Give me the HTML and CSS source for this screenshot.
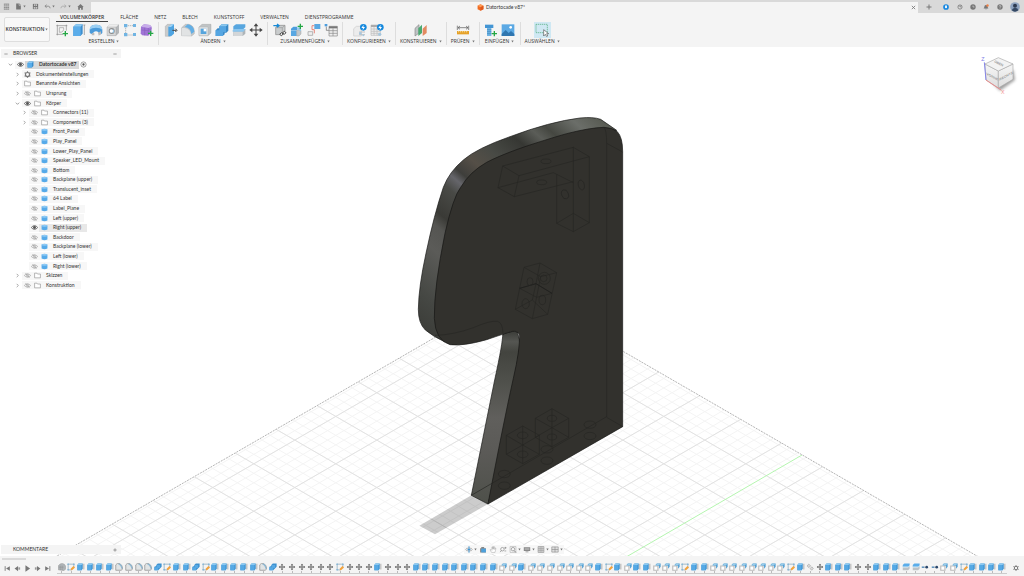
FILE: index.html
```html
<!DOCTYPE html>
<html lang="de">
<head>
<meta charset="utf-8">
<title>Datortocade v87*</title>
<link rel="stylesheet" href="styles.css">
</head>
<body>
<svg class="sprite" aria-hidden="true">
  <symbol id="apps" viewBox="0 0 24 24"><path d="M3 4h18M3 10h18M3 16h18M3 21h18" stroke="#777" stroke-width="3"/><path d="M9 3v20M15 3v20" stroke="#d9d9d9"/></symbol>
  <symbol id="file" viewBox="0 0 24 24"><path d="M4 2h11l5 5v15H4z" fill="#777"/><path d="M14 2v6h6" fill="none" stroke="#d9d9d9" stroke-width="2"/></symbol>
  <symbol id="save" viewBox="0 0 24 24"><path d="M3 3h18v18H3z" fill="#777"/><path d="M7 4h10v6H7zM6 14h12v6H6z" fill="#c8c8c8"/><path d="M12 4v16" stroke="#777" stroke-width="2"/></symbol>
  <symbol id="undo" viewBox="0 0 24 24"><path d="M9 6l-6 5 6 5M4 11h11q5 0 6 7" fill="none" stroke="#888" stroke-width="3"/></symbol>
  <symbol id="redo" viewBox="0 0 24 24"><path d="M15 6l6 5-6 5M20 11H9q-5 0-6 7" fill="none" stroke="#aaa" stroke-width="3"/></symbol>
  <symbol id="home" viewBox="0 0 24 24"><path d="M12 3L1 14h3v9h6v-6h4v6h6v-9h3z" fill="#777"/></symbol>
  <symbol id="orangecube" viewBox="0 0 24 24"><path d="M12 1l10 5v12l-10 5-10-5V6z" fill="#ef6b22"/><path d="M12 1l10 5-10 5L2 6z" fill="#ff9a55"/><path d="M12 11v12l10-5V6z" fill="#e0581a"/></symbol>
  <symbol id="down" viewBox="0 0 10 10"><path d="M1 2h8L5 8z" fill="#777"/></symbol>
  <symbol id="close" viewBox="0 0 12 12"><path d="M2 2l8 8M10 2l-8 8" stroke="#777" stroke-width="2"/></symbol>
  <symbol id="plus" viewBox="0 0 12 12"><path d="M6 1v10M1 6h10" stroke="#777" stroke-width="2"/></symbol>
  <symbol id="minus" viewBox="0 0 12 12"><path d="M1 6h10" stroke="#777" stroke-width="2"/></symbol>
  <symbol id="ext" viewBox="0 0 20 20"><circle cx="10" cy="10" r="9.500" fill="#1787e0"/><path d="M7 5h6v7l-3 3-3-3z" fill="#fff"/></symbol>
  <symbol id="online" viewBox="0 0 20 20"><circle cx="10" cy="10" r="7" fill="none" stroke="#777" stroke-width="2.500"/><path d="M4 6l7 2 2 4M10 8l6-3" fill="none" stroke="#777" stroke-width="2"/></symbol>
  <symbol id="clock" viewBox="0 0 20 20"><circle cx="10" cy="10" r="9" fill="#777"/><path d="M10 5v5h5" fill="none" stroke="#ddd" stroke-width="2"/></symbol>
  <symbol id="bell" viewBox="0 0 20 20"><path d="M2 15q3-3 3-8 1-4 5-4t5 4q0 5 3 8zM8 16h4l-2 3z" fill="#777"/><circle cx="15" cy="5" r="4" fill="#f08045"/></symbol>
  <symbol id="help" viewBox="0 0 20 20"><circle cx="10" cy="10" r="9" fill="#777"/><path d="M7 8q0-3 3-3t3 3q0 2-3 3v2M10 14v2" fill="none" stroke="#ddd" stroke-width="2"/></symbol>
  <symbol id="avatar" viewBox="0 0 30 30"><circle cx="15" cy="15" r="14.500" fill="#8fa3bf"/><circle cx="15" cy="11" r="6" fill="#2d3a50"/><path d="M5 25q3-8 10-8t10 8q-10 8-20 0z" fill="#354863"/></symbol>

  <symbol id="t-sketch" viewBox="0 0 42 42"><path d="M4 8h33M7 5v32M34 5v18M4 34h20" fill="none" stroke="#888" stroke-width="2"/><path d="M13 14h13q2 14-13 14z" fill="none" stroke="#999" stroke-width="2"/><path d="M31 24v16M23 32h16" stroke="#25a845" stroke-width="4"/></symbol>
  <symbol id="t-extrude" viewBox="0 0 42 42"><path d="M4 11l8-7h20v28l-7 7H4z" fill="#3e8fce"/><path d="M4 11l8-7h20l-6 7z" fill="#8fcbf3"/><path d="M4 11h22v28H4z" fill="#5badea"/><path d="M37 6v30M34 6h6" stroke="#888" stroke-width="2"/></symbol>
  <symbol id="t-revolve" viewBox="0 0 42 42"><path d="M2 21Q2 5 21 5t19 16v9q-4 5-10 3-1-8-9-8t-9 8q-6 1-10-4z" fill="#4b9bda"/><path d="M2 20Q2 5 21 5t19 15q-6-6-19-6T2 20z" fill="#9bcff3"/><path d="M9 30h7v7H8zM27 29l9-4v9l-7 4z" fill="#bbb"/></symbol>
  <symbol id="t-hole" viewBox="0 0 42 42"><path d="M3 12l9-8h27v26l-9 8H3z" fill="#b4b7b9"/><path d="M3 12l9-8h27l-9 8z" fill="#ededed"/><path d="M3 12h27v26H3z" fill="#d5d7d8" stroke="#999"/><circle cx="17" cy="24" r="9" fill="#8b8b8b"/><path d="M13 20h11v9H13z" fill="#9ac9e8"/><circle cx="16" cy="24" r="5" fill="#fff"/></symbol>
  <symbol id="t-pattern" viewBox="0 0 42 42"><path d="M8 8h28M8 8v28h28" fill="none" stroke="#999" stroke-width="2" stroke-dasharray="4 2"/><path d="M3 3h10v10H3zM30 3h9v9h-9zM3 30h10v10H3zM30 30h9v9h-9z" fill="#70b4e3"/></symbol>
  <symbol id="t-form" viewBox="0 0 42 42"><path d="M3 11l9-7 18 2 5 6-1 18-10 8-18-1-4-6z" fill="#a074d6"/><path d="M3 11l9-7 18 2 5 5-10 4z" fill="#c8adea"/><path d="M4 21l20 2 11-6M14 14v23M25 15v22" fill="none" stroke="#8a62bd" stroke-width="2"/><path d="M32 23v16M24 31h16" stroke="#25a845" stroke-width="4"/></symbol>
  <symbol id="t-press" viewBox="0 0 42 42"><path d="M4 10l6-6h16v28l-8 8H4z" fill="#c8cbcc" stroke="#999"/><path d="M13 12l9-8h8v28l-9 8h-8z" fill="#4fa4e1"/><path d="M13 12l9-8h8l-9 8z" fill="#a3d6f7"/><path d="M25 22h12M34 17l5 5-5 5" fill="none" stroke="#444" stroke-width="3"/></symbol>
  <symbol id="t-fillet" viewBox="0 0 42 42"><path d="M2 38V14L13 4h11q15 4 16 20v8l-8 7z" fill="#c3c7c9" stroke="#999"/><path d="M3 38V15h8q18 2 19 23z" fill="#e1e3e4"/><path d="M11 12l9-8q18 3 20 22l-9 7Q30 15 11 12z" fill="#63afe5"/></symbol>
  <symbol id="t-shell" viewBox="0 0 42 42"><path d="M3 12l9-8h27v26l-9 8H3z" fill="#bfc3c5" stroke="#999"/><path d="M3 12h27v26H3z" fill="#dfe2e3" stroke="#aaa"/><path d="M8 17h17v16H8z" fill="#57a5dd"/><path d="M17 17h8v8h-8z" fill="#fff"/></symbol>
  <symbol id="t-combine" viewBox="0 0 42 42"><path d="M13 10l7-6h20v19l-6 6h-5v5l-6 5H2V22l6-6h5z" fill="#3989c6"/><path d="M2 22h11V10h20v18h-9v11H2z" fill="#55a6e2"/><path d="M13 10l7-6h20l-7 6z" fill="#8bc8ef"/></symbol>
  <symbol id="t-split" viewBox="0 0 42 42"><path d="M4 10l8-6h28v9l-8 7H4z" fill="#57a6df"/><path d="M4 24l8-6h28v14l-8 7H4z" fill="#aeb4b8"/><path d="M4 26h28v13H4z" fill="#d3d6d8"/><path d="M2 21l8-3h31l-7 8H2z" fill="#8cc6ee"/></symbol>
  <symbol id="t-move" viewBox="0 0 42 42"><path d="M21 8v26M8 21h26" stroke="#444" stroke-width="3"/><path d="M21 1l7 9H14zM21 41l7-9H14zM1 21l9-7v14zM41 21l-9-7v14z" fill="#444"/></symbol>
  <symbol id="t-newcomp" viewBox="0 0 42 42"><path d="M8 14l6-7h22v17l-8 11H8z" fill="#c9cccd" stroke="#888" stroke-width="2"/><path d="M8 14h20v21M28 14l8-7" fill="none" stroke="#999" stroke-width="2"/><path d="M1 8h15M12 3l6 5-6 5" fill="none" stroke="#1689d6" stroke-width="4"/><path d="M20 34l6-5 5 4-6 5zM28 30l6-5 5 4-5 5z" fill="#eee" stroke="#444" stroke-width="3"/></symbol>
  <symbol id="t-asm" viewBox="0 0 42 42"><path d="M3 17l7-6h12v10H3z" fill="#4c9ddd"/><path d="M3 22h17v17H3z" fill="#59a8e2"/><path d="M20 22h13v11l-6 6h-7z" fill="#c4c8ca" stroke="#888"/><path d="M20 18l5-5h8v12" fill="#94c9ed"/><path d="M31 2v16M23 10h16" stroke="#25a845" stroke-width="4"/></symbol>
  <symbol id="t-joint" viewBox="0 0 42 42"><path d="M22 3h18v15H22z" fill="#5aa8e2"/><path d="M3 26h14v11H3z" fill="#eee" stroke="#999" stroke-width="2"/><path d="M22 8h-7v12h7v11" fill="none" stroke="#e05545" stroke-width="2"/></symbol>
  <symbol id="t-bom" viewBox="0 0 42 42"><path d="M2 3h8v7H2z" fill="#4c9ddd"/><path d="M7 11v11h8" fill="none" stroke="#666" stroke-width="2"/><path d="M15 10h25v29H15z" fill="#eee" stroke="#888" stroke-width="2"/><path d="M15 10h25v6H15z" fill="#777"/><path d="M15 23h25M15 31h25M27 16v23" stroke="#888" stroke-width="2"/></symbol>
  <symbol id="t-conf1" viewBox="0 0 42 42"><path d="M2 17l8-7h15v29H2z" fill="#ececec" stroke="#ccc" stroke-width="2"/><path d="M18 27h18M18 35h18" stroke="#aaa" stroke-width="2"/><circle cx="22" cy="31" r="4" fill="#a7c8df"/><circle cx="31" cy="37" r="3" fill="#a7c8df"/><circle cx="31" cy="13" r="10" fill="#1689dd"/><path d="M32 5l-7 10h5l-1 7 7-10h-5z" fill="#fff"/></symbol>
  <symbol id="t-conf2" viewBox="0 0 42 42"><path d="M3 6h28v31H3z" fill="#eee" stroke="#bbb" stroke-width="2"/><path d="M3 6h22v6H3z" fill="#aaa"/><path d="M3 18h28M3 25h28M3 31h28M12 12v25M21 12v25" stroke="#bbb" stroke-width="2"/><circle cx="31" cy="13" r="10" fill="#1689dd"/><path d="M32 5l-7 10h5l-1 7 7-10h-5z" fill="#fff"/><circle cx="29" cy="34" r="5" fill="#a7c8df"/></symbol>
  <symbol id="t-plane" viewBox="0 0 42 42"><path d="M3 16L15 5v25L3 39z" fill="#bfc3c5" stroke="#888" stroke-width="2"/><path d="M13 16L24 5v25L13 39z" fill="#4aaa71"/><path d="M26 17L38 6v24L26 39z" fill="#e28a61"/></symbol>
  <symbol id="t-measure" viewBox="0 0 42 42"><path d="M4 8v13M38 8v13M6 14h30M12 9l-6 5 6 5M30 9l6 5-6 5" fill="none" stroke="#555" stroke-width="2"/><path d="M3 24h36v10H3z" fill="#e6a229"/><path d="M8 24v4M14 24v4M20 24v4M26 24v4M32 24v4" stroke="#fff3c7" stroke-width="2"/></symbol>
  <symbol id="t-insert" viewBox="0 0 42 42"><path d="M3 5h25v10H3z" fill="#4395d4"/><path d="M9 15h13v24H9z" fill="#70b4e4"/><path d="M9 20h13M9 26h13M9 32h13" stroke="#3b85bd" stroke-width="2"/><path d="M31 24v16M23 32h16" stroke="#25a845" stroke-width="4"/></symbol>
  <symbol id="t-image" viewBox="0 0 42 42"><path d="M2 4h38v35H2z" fill="#5ba9e4"/><path d="M2 33l12-12 9 9 7-6 10 9v6H2z" fill="#2f76b0"/><circle cx="29" cy="13" r="4" fill="#fff"/></symbol>
  <symbol id="t-select" viewBox="0 0 42 42"><path d="M3 4h34v25H3z" fill="none" stroke="#48a873" stroke-width="2" stroke-dasharray="4 2"/><path d="M26 20v19l5-5 4 7 3-2-3-7h6z" fill="#fff" stroke="#555" stroke-width="2"/></symbol>

  <symbol id="chev-r" viewBox="0 0 12 12"><path d="M4 2l4 4-4 4" fill="none" stroke="#777" stroke-width="1.500"/></symbol>
  <symbol id="chev-d" viewBox="0 0 12 12"><path d="M2 4l4 4 4-4" fill="none" stroke="#666" stroke-width="1.500"/></symbol>
  <symbol id="eye" viewBox="0 0 24 24"><path d="M1 12Q12-1 23 12 12 25 1 12z" fill="none" stroke="#666" stroke-width="3"/><circle cx="12" cy="12" r="5" fill="#555"/></symbol>
  <symbol id="eye-off" viewBox="0 0 24 24"><path d="M1 12Q12 0 23 12 12 24 1 12z" fill="none" stroke="#999" stroke-width="2"/><circle cx="12" cy="12" r="4" fill="none" stroke="#999" stroke-width="2"/><path d="M5 4l14 16" stroke="#999" stroke-width="2"/></symbol>
  <symbol id="folder" viewBox="0 0 24 24"><path d="M2 20V4h8l2 3h10v13z" fill="#fff" stroke="#888" stroke-width="2"/></symbol>
  <symbol id="body" viewBox="0 0 24 24"><path d="M2 5q10-5 20 0v14q-10 5-20 0z" fill="#56aae9"/><ellipse cx="12" cy="6" rx="10" ry="3" fill="#91cbf5"/></symbol>
  <symbol id="comp" viewBox="0 0 24 24"><path d="M2 7l5-5h15v15l-5 5H2z" fill="#378dcc"/><path d="M2 7l5-5h15l-5 5z" fill="#8bc9f4"/><path d="M2 7h15v15H2z" fill="#59adea"/></symbol>
  <symbol id="gear" viewBox="0 0 24 24"><circle cx="12" cy="12" r="7" fill="none" stroke="#777" stroke-width="4"/><path d="M12 1v4M12 19v4M2 6l4 2M18 16l4 2M2 18l4-2M18 8l4-2" stroke="#777" stroke-width="4"/></symbol>
  <symbol id="radio" viewBox="0 0 24 24"><circle cx="12" cy="12" r="9" fill="#fff" stroke="#666" stroke-width="2"/><circle cx="12" cy="12" r="4" fill="#555"/></symbol>

  <symbol id="orbit" viewBox="0 0 24 24"><ellipse cx="12" cy="12" rx="11" ry="5" fill="none" stroke="#888" stroke-width="2"/><path d="M12 1v22M7 12h10" stroke="#318ed0" stroke-width="3"/></symbol>
  <symbol id="look" viewBox="0 0 24 24"><path d="M2 8h20v14H2zM6 3h10v5H6z" fill="#888"/><path d="M6 9h16v13H6z" fill="#4da0db"/></symbol>
  <symbol id="hand" viewBox="0 0 24 24"><path d="M7 22l-5-9 3-1 3 3V4h3v7V2h3v9l1-8h3v9l2-5 2 1-3 14z" fill="#fff" stroke="#999" stroke-width="1.500"/></symbol>
  <symbol id="zoom" viewBox="0 0 24 24"><circle cx="10" cy="11" r="6" fill="none" stroke="#777" stroke-width="2"/><path d="M6 16l-4 5M20 3v7M17 6h7M17 17h6" stroke="#777" stroke-width="2"/></symbol>
  <symbol id="fit" viewBox="0 0 24 24"><path d="M2 2h20v20H2z" fill="none" stroke="#aaa" stroke-width="2"/><circle cx="12" cy="11" r="6" fill="none" stroke="#777" stroke-width="2"/><path d="M16 16l6 6" stroke="#777" stroke-width="3"/></symbol>
  <symbol id="display" viewBox="0 0 24 24"><path d="M1 4h22v13H1zM7 19h10v2H7z" fill="#888"/><path d="M4 7h16v7H4z" fill="#aaa"/></symbol>
  <symbol id="grid" viewBox="0 0 24 24"><path d="M2 2h20v20H2z" fill="#ddd" stroke="#888" stroke-width="2"/><path d="M9 2v20M15 2v20M2 9h20M2 15h20" stroke="#999" stroke-width="2"/></symbol>
  <symbol id="views" viewBox="0 0 24 24"><path d="M1 3h22v18H1z" fill="#ddd" stroke="#888" stroke-width="2"/><path d="M12 3v18M1 12h22" stroke="#888" stroke-width="2"/></symbol>

  <symbol id="first" viewBox="0 0 24 24"><path d="M4 4v16" stroke="#777" stroke-width="3"/><path d="M20 4v16L7 12z" fill="#777"/></symbol>
  <symbol id="prev" viewBox="0 0 24 24"><path d="M14 3v18L2 12z" fill="#777"/><path d="M15 8h6v8h-6z" fill="#999"/></symbol>
  <symbol id="play" viewBox="0 0 24 24"><path d="M5 1v22l16-11z" fill="#777"/></symbol>
  <symbol id="next" viewBox="0 0 24 24"><path d="M10 3v18l12-9z" fill="#777"/><path d="M3 8h6v8H3z" fill="#999"/></symbol>
  <symbol id="last" viewBox="0 0 24 24"><path d="M20 4v16" stroke="#777" stroke-width="3"/><path d="M4 4v16l13-8z" fill="#777"/></symbol>

  <symbol id="k-b" viewBox="0 0 21 21"><path d="M1 18V7q4-6 10-6t9 7v8l-4 4z" fill="#aeb3b6" stroke="#858585"/><path d="M6 7v12M11 7v12M2 11h13" stroke="#8b8b8b"/></symbol>
  <symbol id="k-s" viewBox="0 0 21 21"><path d="M3 3h15v9M3 3v15h9" fill="none" stroke="#89a9bf" stroke-width="2"/><path d="M1 1h4v4H1zM16 1h4v4h-4zM1 16h4v4H1z" fill="#86b5d5"/><path d="M10 20l1-6 6-6 4 4-6 6z" fill="#f1a23d"/></symbol>
  <symbol id="k-e" viewBox="0 0 21 21"><path d="M1 5l3-4h11v14l-3 4H1z" fill="#368ccb"/><path d="M1 5l3-4h11l-3 4z" fill="#91cdf4"/><path d="M1 5h11v14H1z" fill="#55a9e5"/><path d="M18 2v15" stroke="#999" stroke-width="2"/></symbol>
  <symbol id="k-f" viewBox="0 0 21 21"><path d="M2 19V5l4-4h5q8 3 9 12v3l-4 3z" fill="#e1e4e5" stroke="#929292" stroke-width="2"/><path d="M8 3q8 3 9 13l3-2Q18 3 11 1z" fill="#8db7d2"/></symbol>
  <symbol id="k-c" viewBox="0 0 21 21"><path d="M6 5l4-4h10v9l-5 5-4 4H1v-9l5-2z" fill="#3d91d0"/><path d="M1 11h6V5h9v8h-5v6H1z" fill="#57a9e4"/></symbol>
  <symbol id="k-m" viewBox="0 0 21 21"><path d="M10.500 4v13M4 10.500h13" stroke="#555" stroke-width="2"/><path d="M10.500 2l3 4h-6zM10.500 19l3-4h-6zM2 10.500l4-3v6zM19 10.500l-4-3v6z" fill="#555"/></symbol>
  <symbol id="k-x" viewBox="0 0 21 21"><path d="M2 8h11v11H2z" fill="#fff" stroke="#bbb" stroke-width="3"/><path d="M6 6l4-5h10v9l-4 5V7z" fill="#4b9bd2"/><path d="M7 6l4-4h8l-3 4z" fill="#9acdeb"/></symbol>
  <symbol id="k-l" viewBox="0 0 21 21"><path d="M3 8l4-5 5 4-4 5zM11 15l4-5 4 4-4 5z" fill="#ddd" stroke="#aaa" stroke-width="2"/></symbol>
  <symbol id="k-p" viewBox="0 0 21 21"><path d="M2 5l4-4h14v5l-4 4H2z" fill="#5badea"/><path d="M2 12h14l4-4v7l-4 4H2z" fill="#bcc2c6"/><path d="M2 10h14l4-3" fill="none" stroke="#a8d8f4" stroke-width="2"/></symbol>
  <symbol id="k-j" viewBox="0 0 21 21"><path d="M2 9h7v4H2z" fill="#5b91bd"/><path d="M9 11h4" stroke="#999" stroke-width="2"/><circle cx="15" cy="11" r="3.500" fill="#29466b"/></symbol>
</svg>

<header class="titlebar">
  <nav class="quick">
    <button aria-label="Datengruppe"><svg><use href="#apps"/></svg></button>
    <button aria-label="Datei"><svg><use href="#file"/></svg><svg class="arrow"><use href="#down"/></svg></button>
    <button aria-label="Speichern"><svg><use href="#save"/></svg></button>
    <button aria-label="Rückgängig"><svg><use href="#undo"/></svg><svg class="arrow"><use href="#down"/></svg></button>
    <button aria-label="Wiederholen"><svg><use href="#redo"/></svg><svg class="arrow"><use href="#down"/></svg></button>
    <button aria-label="Startseite"><svg><use href="#home"/></svg></button>
  </nav>
  <div class="doc-tab">
    <div class="doc-title"><svg><use href="#orangecube"/></svg><span>Datortocade v87*</span></div>
    <button aria-label="Schließen"><svg><use href="#close"/></svg></button>
  </div>
  <nav class="account">
    <button class="new-tab" aria-label="Neu"><svg><use href="#plus"/></svg></button>
    <button aria-label="Erweiterungen"><svg><use href="#ext"/></svg></button>
    <button aria-label="Online"><svg><use href="#online"/></svg></button>
    <button aria-label="Auftragsstatus"><svg><use href="#clock"/></svg></button>
    <button aria-label="Benachrichtigungen"><svg><use href="#bell"/></svg></button>
    <button aria-label="Hilfe"><svg><use href="#help"/></svg></button>
    <button class="avatar" aria-label="Konto"><svg><use href="#avatar"/></svg></button>
  </nav>
</header>

<section class="ribbon">
  <button class="workspace">KONSTRUKTION <svg class="arrow"><use href="#down"/></svg></button>
  <div class="ribbon-main">
    <nav class="tabs">
      <button class="active">VOLUMENKÖRPER</button><button>FLÄCHE</button><button>NETZ</button><button>BLECH</button><button>KUNSTSTOFF</button><button>VERWALTEN</button><button>DIENSTPROGRAMME</button>
    </nav>
    <div class="groups" id="groups"></div>
  </div>
</section>

<main class="stage">
  <svg class="scene" viewBox="0 47 1024 509" preserveAspectRatio="xMidYMid slice" role="img" aria-label="3D-Ansicht">
    <defs>
      <clipPath id="floor"><path d="M517 290L1117 637H-83z"/></clipPath>
      <linearGradient id="rim" gradientUnits="userSpaceOnUse" x1="70" y1="700" x2="620" y2="60">
        <stop offset="0" stop-color="#3b3c38"/><stop offset=".1" stop-color="#454743"/><stop offset=".25" stop-color="#5b5b58"/><stop offset=".32" stop-color="#555552"/><stop offset=".36" stop-color="#3a3a36"/><stop offset=".45" stop-color="#494a46"/><stop offset=".49" stop-color="#65656a"/><stop offset=".52" stop-color="#3e3e3b"/><stop offset=".58" stop-color="#554f47"/><stop offset=".65" stop-color="#484a45"/><stop offset=".74" stop-color="#363733"/><stop offset=".8" stop-color="#5b5d58"/><stop offset=".84" stop-color="#454741"/><stop offset=".92" stop-color="#6b6e69"/><stop offset="1" stop-color="#55584f"/>
      </linearGradient>
      <linearGradient id="leg" x1="0" y1="0" x2="0" y2="1">
        <stop offset="0" stop-color="#3c3d39"/><stop offset=".06" stop-color="#555652"/><stop offset=".12" stop-color="#43443f"/><stop offset=".3" stop-color="#50514c"/><stop offset=".5" stop-color="#605f5c"/><stop offset=".7" stop-color="#5b5a57"/><stop offset="1" stop-color="#4e504a"/>
      </linearGradient>
      <linearGradient id="cubeface" x1="0" y1="0" x2="0" y2="1"><stop offset="0" stop-color="#f6f6f6"/><stop offset="1" stop-color="#dedede"/></linearGradient>
      <filter id="soft" x="-30%" y="-30%" width="160%" height="160%"><feGaussianBlur stdDeviation="5"/></filter>
    </defs>
    <g clip-path="url(#floor)">
      <path id="minor" class="minor"/>
      <path id="major" class="major"/>
      <path class="axis-y" d="M802 455L602 571"/>
    </g>
    <path class="floor-edge" d="M-83 637L517 290 1117 637"/>
    <g transform="translate(400 100) scale(.33333)">
      <path fill="#000" fill-opacity=".2" d="M58 1277L105 1303 264 1212 214 1186z"/>
      <path class="edge" fill="url(#rim)" d="M135 726Q100 710 76 690 55 670 55 628 56 560 78 460 102 345 130 262 148 215 190 180 230 145 330 110 450 65 540 54 580 50 602 58L650 91 600 130 250 300 170 600z"/>
      <path class="edge" fill="url(#leg)" d="M308 703Q335 690 352 696L362 730 300 1080 264 1212 214 1186 284 840Q309 725 308 703z"/>
      <path class="edge" fill="#32312d" d="M668 155V980L264 1212Q310 970 340 835 361 745 358 705 354 692 338 694 315 700 260 719 190 739 150 734 106 721 103 655 102 560 135 400 160 290 182 262 210 215 260 187 330 150 500 101 570 83 612 82 638 83 652 95 668 112 668 155z"/>
      <g class="hidden-lines">
        <path d="M308 198L520 142 568 170 357 227zM308 198L294 263 343 290 357 227M294 263L460 218 520 248M343 290L520 245V142M470 223V370L520 395 568 368V170M470 370L520 340 568 368M520 245V395"/>
        <ellipse cx="438" cy="184" rx="15" ry="7"/><ellipse cx="425" cy="247" rx="15" ry="7"/>
        <ellipse cx="495" cy="283" rx="10" ry="14" transform="rotate(-20 495 283)"/><ellipse cx="544" cy="255" rx="9" ry="15" transform="rotate(-15 544 255)"/>
        <path d="M372 502L420 489 470 518 443 643 397 656 346 628zM372 502L422 530 397 656M422 530L470 518M359 565L408 551 456 580 410 592zM420 489L408 551M408 551L397 600 346 628M397 600L443 643"/>
        <path stroke="#1d1d1b" d="M359 565L408 551 456 580"/>
        <ellipse cx="390" cy="545" rx="9" ry="12"/><ellipse cx="377" cy="611" rx="11" ry="15"/><ellipse cx="427" cy="600" rx="10" ry="14"/><circle cx="433" cy="535" r="18"/><circle cx="431" cy="535" r="10"/>
        <path d="M105 706Q160 705 220 683 270 661 292 664 308 667 309 700M612 82Q620 90 620 130V950L214 1186M620 130L668 156M620 952L668 980"/>
        <path d="M456 926L506 955V1012L456 1040 406 1012V955zM406 955L456 983 506 955M406 1012L456 983 506 1012M456 926V1040M368 978L418 1006V1063L368 1091 319 1063V1006zM319 1006L368 1035 418 1006M319 1063L368 1035 418 1063M368 978V1091"/>
        <ellipse cx="456" cy="955" rx="14" ry="9"/><ellipse cx="456" cy="1011" rx="14" ry="9"/><ellipse cx="368" cy="1006" rx="16" ry="10"/><ellipse cx="368" cy="1063" rx="16" ry="10"/>
        <ellipse cx="570" cy="974" rx="18" ry="11"/><ellipse cx="570" cy="1008" rx="18" ry="11"/><ellipse cx="441" cy="1048" rx="18" ry="11"/><ellipse cx="441" cy="1082" rx="18" ry="11"/><ellipse cx="313" cy="1122" rx="18" ry="11"/><ellipse cx="313" cy="1157" rx="18" ry="11"/>
      </g>
    </g>
    <g transform="translate(860 0) scale(.33333)">
      <path d="M385 235L420 272 465 240 460 210z" fill="#777" opacity=".7" filter="url(#soft)"/>
      <path class="cube" d="M375 192L415 213V264L378 240z"/><path class="cube" d="M415 213L459 192V238L415 264z"/><path class="cube top" d="M415 173L459 192 415 213 375 192z"/>
      <path d="M373 187L378 240" stroke="#8585ea" stroke-width="3"/><path d="M378 240L423 270" stroke="#e98b8b" stroke-width="3"/>
      <text class="cube-text" transform="translate(402 187) rotate(26)">OBEN</text>
      <text class="cube-text" transform="translate(379 224) skewY(28)">VORNE</text>
      <text class="cube-text" transform="translate(418 242) skewY(-27)">RECHTS</text>
      <text class="axis-text" x="364" y="183" fill="#8080e8">Z</text><text class="axis-text" x="423" y="282" fill="#f59090">X</text>
    </g>
  </svg>

  <aside class="browser">
    <div class="panel-head"><button aria-label="Einklappen"><svg><use href="#minus"/></svg></button><span>BROWSER</span><button aria-label="Minimieren"><svg><use href="#minus"/></svg></button></div>
    <ul class="tree" id="tree"></ul>
  </aside>

  <div class="stage-foot">
    <div class="panel-head comments"><span>KOMMENTARE</span><button aria-label="Kommentar hinzufügen"><svg><use href="#plus"/></svg></button></div>
    <nav class="viewbar">
      <button aria-label="Orbit"><svg><use href="#orbit"/></svg><svg class="arrow"><use href="#down"/></svg></button>
      <button aria-label="Ansehen"><svg><use href="#look"/></svg></button>
      <button aria-label="Pan"><svg><use href="#hand"/></svg></button>
      <button aria-label="Zoom"><svg><use href="#zoom"/></svg></button>
      <button aria-label="Einpassen"><svg><use href="#fit"/></svg><svg class="arrow"><use href="#down"/></svg></button>
      <button aria-label="Anzeige"><svg><use href="#display"/></svg><svg class="arrow"><use href="#down"/></svg></button>
      <button aria-label="Raster"><svg><use href="#grid"/></svg><svg class="arrow"><use href="#down"/></svg></button>
      <button aria-label="Ansichtsfenster"><svg><use href="#views"/></svg><svg class="arrow"><use href="#down"/></svg></button>
    </nav>
  </div>
</main>

<footer class="timeline">
  <div class="player">
    <div class="scroll-thumb"></div>
    <div class="player-buttons">
      <button aria-label="Anfang"><svg><use href="#first"/></svg></button>
      <button aria-label="Zurück"><svg><use href="#prev"/></svg></button>
      <button aria-label="Wiedergabe"><svg><use href="#play"/></svg></button>
      <button aria-label="Vor"><svg><use href="#next"/></svg></button>
      <button aria-label="Ende"><svg><use href="#last"/></svg></button>
    </div>
  </div>
  <div class="track" id="track"></div>
  <button class="settings" aria-label="Einstellungen"><svg><use href="#gear"/></svg></button>
</footer>
<script src="app.js"></script>
</body>
</html>
```

FILE: styles.css
```css
* { box-sizing: border-box; }
html, body { height: 100%; }
body {
  margin: 0;
  display: flex;
  flex-direction: column;
  overflow: hidden;
  background: #fff;
  color: #333;
  font-family: Lato, "Noto Sans", sans-serif;
  font-size: 5px;
  line-height: 7px;
}
button {
  display: flex;
  align-items: center;
  justify-content: center;
  margin: 0;
  padding: 0;
  border: 0;
  background: none;
  color: inherit;
  font: inherit;
}
svg { display: block; flex: none; }
.sprite { position: absolute; width: 0; height: 0; }
.arrow { width: 3px; height: 3px; }

.titlebar {
  display: flex;
  height: 13px;
  flex: none;
  background: #d9d9d9;
}
.quick { display: flex; align-items: center; width: 91px; padding-left: 2px; gap: 5px; }
.quick button { min-width: 8px; gap: 1px; }
.quick svg { width: 7px; height: 7px; }
.quick .arrow, .viewbar .arrow { width: 3px; height: 3px; }
.doc-tab {
  display: flex;
  flex: 1;
  align-items: center;
  margin-top: 2px;
  padding-right: 2px;
  background: #f4f4f4;
}
.doc-title { display: flex; flex: 1; align-items: center; justify-content: center; gap: 2px; }
.doc-title svg { width: 7px; height: 7px; }
.doc-tab button svg { width: 5px; height: 5px; }
.account { display: flex; align-items: center; justify-content: space-between; width: 106px; padding: 0 4px 0 8px; }
.account svg { width: 6px; height: 6px; }
.account .new-tab { margin-right: 4px; }
.account .avatar svg { width: 10px; height: 10px; }

.ribbon {
  display: flex;
  flex: none;
  height: 34px;
  padding: 0 4px;
  background: #f4f4f4;
  font-family: "Open Sans", "Noto Sans", sans-serif;
}
.workspace {
  width: 46px;
  height: 25px;
  margin-top: 4px;
  gap: 1px;
  border: 1px solid #dedede;
  border-radius: 2px;
  background: #f8f8f8;
  font-weight: 600;
}
.tabs { display: flex; gap: 8px; padding-left: 6px; }
.tabs button { padding: 0 4px; height: 9px; border-bottom: 1px solid transparent; }
.tabs .active { border-color: #444; font-weight: 600; }
.groups { display: flex; }
.group { padding: 0 3px; border-right: 1px solid #ddd; height: 23px; }
.group:last-child { border: 0; }
.tools { display: flex; justify-content: center; height: 16px; }
.tools button { width: 17px; height: 16px; }
.tools svg { width: 14px; height: 14px; }
.tools .selected { background: #cfe8f3; }
.group-label { width: 100%; padding: 0 1px; gap: 2px; white-space: nowrap; }

.stage { position: relative; display: flex; flex: 1; flex-direction: column; justify-content: space-between; min-height: 0; }
.scene { position: absolute; inset: 0; width: 100%; height: 100%; }
.minor { fill: none; stroke: #f4f4f4; stroke-width: 1; }
.major { fill: none; stroke: #e2e2e2; stroke-width: 1; }
.axis-y { stroke: #b5f5b0; stroke-width: 1; }
.floor-edge { fill: none; stroke: #b5b5b5; stroke-width: 1; stroke-dasharray: 2 1; }
.edge { stroke: #151514; stroke-width: 2; }
.hidden-lines { fill: none; stroke: #252522; stroke-width: 2; }
.cube { fill: url(#cubeface); stroke: #aaa; stroke-width: 2; }
.cube.top { fill: #f3f3f3; }
.cube-text { font: 700 10px "Liberation Sans", sans-serif; fill: #999; }
.axis-text { font: 400 16px "Liberation Sans", sans-serif; }

.browser, .stage-foot { position: relative; }
.browser { width: 121px; padding: 2px 0 0 1px; }
.panel-head { display: flex; align-items: center; height: 9px; padding: 0 4px 0 3px; background: #f4f4f4; }
.panel-head span { flex: 1; padding-left: 5px; }
.panel-head svg { width: 4px; height: 4px; }
.tree {
  display: grid;
  grid-auto-rows: 1fr;
  height: 230px;
  margin: 2px 0 0;
  padding: 0;
  list-style: none;
}
.tree li { display: flex; align-items: center; padding-left: 4px; }
.tree .level-1 { padding-left: 11px; }
.tree .level-2 { padding-left: 18px; }
.slot { display: flex; justify-content: center; width: 10px; }
.slot svg { width: 7px; height: 7px; }
.slot.chevron svg { width: 5px; height: 5px; }
.node { display: flex; align-items: center; height: 8px; padding-right: 6px; background: #f7f7f7; white-space: nowrap; }
.node .name { padding-left: 4px; }
.node.root { padding-right: 2px; background: linear-gradient(to right, #f7f7f7 10px, #d9d9d9 10px); font-weight: 700; }
.node.selected { background: linear-gradient(to right, #f7f7f7 10px, #e8e8e8 10px); }

.stage-foot { display: flex; align-items: center; padding: 0 0 2px 1px; }
.comments { width: 120px; }
.comments span { padding-left: 9px; }
.viewbar { display: flex; margin-left: 343px; height: 9px; padding: 0 1px; gap: 2px; background: #f7f7f7; }
.viewbar button { gap: 1px; }
.viewbar svg { width: 8px; height: 7px; }

.timeline { display: flex; flex: none; height: 20px; background: #f4f4f4; }
.player { width: 57px; padding: 2px; }
.scroll-thumb { width: 24px; height: 2px; background: #d9d9d9; }
.player-buttons { display: flex; margin-top: 4px; }
.player-buttons button { width: 10px; height: 8px; }
.player-buttons svg { width: 7px; height: 7px; }
.track { display: flex; flex: 1; height: 18px; border-bottom: 1px solid #ccc; }
.track button { flex: 1; flex-direction: column; justify-content: flex-end; }
.track svg { width: 8px; height: 8px; }
.track button::after { content: ""; width: 1px; height: 2px; background: #bbb; }
.settings { width: 17px; height: 24px; }
.settings svg { width: 6px; height: 6px; }
```

FILE: app.js
```js
const icon = id => `<svg><use href="#${id}"/></svg>`;

// Ribbon tool groups: label and icon ids
const groups = [
  ["ERSTELLEN", ["sketch", "extrude", "revolve", "hole", "pattern", "form"]],
  ["ÄNDERN", ["press", "fillet", "shell", "combine", "split", "move"]],
  ["ZUSAMMENFÜGEN", ["newcomp", "asm", "joint", "bom"]],
  ["KONFIGURIEREN", ["conf1", "conf2"]],
  ["KONSTRUIEREN", ["plane"]],
  ["PRÜFEN", ["measure"]],
  ["EINFÜGEN", ["insert", "image"]],
  ["AUSWÄHLEN", ["select"]]
];
document.getElementById("groups").innerHTML = groups.map(([label, tools]) =>
  `<div class="group"><div class="tools">${tools.map(t =>
    `<button aria-label="${t}"${t === "select" ? ' class="selected"' : ""}>${icon("t-" + t)}</button>`).join("")}</div>
  <button class="group-label">${label}<svg class="arrow"><use href="#down"/></svg></button></div>`).join("");

// Browser tree: level, chevron, icons, name
const rows = [
  [0, "chev-d", ["eye", "comp"], "Datortocade v87"],
  [1, "chev-r", ["gear"], "Dokumenteinstellungen"],
  [1, "chev-r", ["folder"], "Benannte Ansichten"],
  [1, "chev-r", ["eye-off", "folder"], "Ursprung"],
  [1, "chev-d", ["eye", "folder"], "Körper"],
  [2, "chev-r", ["eye-off", "folder"], "Connectors (11)"],
  [2, "chev-r", ["eye-off", "folder"], "Components (3)"],
  ...["Front_Panel", "Play_Panel", "Lower_Play_Panel", "Speaker_LED_Mount", "Bottom",
    "Backplane (upper)", "Translucent_inset", "64 Label", "Label_Plane", "Left (upper)",
    "Right (upper)", "Backdoor", "Backplane (lower)", "Left (lower)", "Right (lower)"
  ].map(n => [2, "", [n === "Right (upper)" ? "eye" : "eye-off", "body"], n]),
  [1, "chev-r", ["eye-off", "folder"], "Skizzen"],
  [1, "chev-r", ["eye-off", "folder"], "Konstruktion"]
];
document.getElementById("tree").innerHTML = rows.map(([level, chev, icons, name]) => {
  const state = level === 0 ? " root" : name === "Right (upper)" ? " selected" : "";
  return `<li class="level-${level}"><span class="slot chevron">${chev ? icon(chev) : ""}</span>
    <span class="node${state}">${icons.map(i => `<span class="slot">${icon(i)}</span>`).join("")}<span class="name">${name}</span></span>
    ${level === 0 ? `<span class="slot">${icon("radio")}</span>` : ""}</li>`;
}).join("");

// Timeline features, one letter per feature kind
const features = "bseeeeffffcseecseeeeefcmmmmmmsmmmemmmeeeeeeeeexxexxxxxxx" +
  "esexeexxxseexxxxxxxxselmeeemmeeeppjjxxseeee";
document.getElementById("track").innerHTML = [...features].map((k, i) =>
  `<button aria-label="Schritt ${i + 1}">${icon("k-" + k)}</button>`).join("");

// Floor grid: major cell is 41 wide, split in five
const slope = 0.578;
function gridPath(step) {
  let d = "";
  for (let x = -1025; x <= 1025; x += step) {
    const cx = 704.8 + x, y = 511.2;
    d += `M${cx - 900} ${y - 900 * slope}L${cx + 900} ${y + 900 * slope}`;
    d += `M${cx - 900} ${y + 900 * slope}L${cx + 900} ${y - 900 * slope}`;
  }
  return d;
}
document.getElementById("minor").setAttribute("d", gridPath(82 / 5));
document.getElementById("major").setAttribute("d", gridPath(82));
```
